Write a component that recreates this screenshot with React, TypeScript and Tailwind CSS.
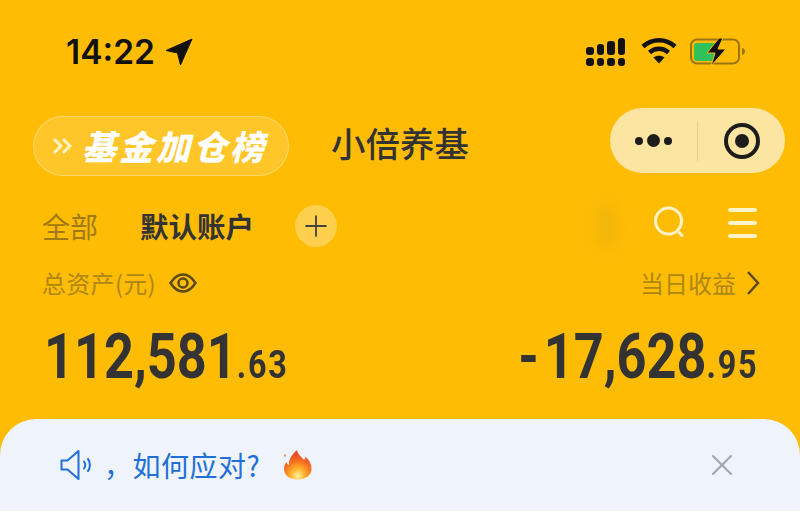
import React from "react";
import { Plus, X } from "lucide-react";

const CJK = "font-['Noto_Sans_CJK_SC',sans-serif]";
const NUM = "font-['Roboto',sans-serif]";

const SignalIcon = () => (
  <svg width="42" height="28" viewBox="0 0 42 28" fill="#111">
    <rect x="0" y="9" width="8" height="8" rx="3" />
    <rect x="11" y="6" width="7" height="11" rx="3" />
    <rect x="21" y="3" width="8" height="14" rx="3" />
    <rect x="32" y="0" width="7" height="17" rx="3" />
    <rect x="0" y="20" width="8" height="8" rx="3" />
    <rect x="11" y="20" width="7" height="8" rx="3" />
    <rect x="21" y="20" width="8" height="8" rx="3" />
    <rect x="32" y="20" width="7" height="8" rx="3" />
  </svg>
);

const WifiIcon = () => (
  <svg className="mb-[3px]" width="36" height="27" viewBox="0 0 36 27" fill="none" stroke="#111" strokeWidth="4.5">
    <path d="M2 9.500C11 1 25 1 34 9.500" />
    <path d="M8.500 15.500C14 10.500 22 10.500 27.500 15.500" />
    <path d="M18 26.500L12.500 20.500C15.500 18 20.500 18 23.500 20.500Z" fill="#111" stroke="none" />
  </svg>
);

const BatteryIcon = () => (
  <svg width="56" height="28" viewBox="0 0 56 28" fill="none">
    <rect x="1" y="1.500" width="48" height="24" rx="6" stroke="#9a7414" strokeWidth="2" />
    <path d="M4 8a3 3 0 0 1 3-3h19v18H7a3 3 0 0 1-3-3Z" fill="#2fc25b" />
    <path d="M52 10c2 .5 3 2 3 3.500s-1 3-3 3.500Z" fill="#9a7414" />
    <path d="M29 0L17 15h8l-4 13 15-17h-8l5-11Z" fill="#111" stroke="#ffbc05" strokeWidth="1" />
  </svg>
);

const FireIcon = () => (
  <svg width="32" height="32" viewBox="0 0 32 32">
    <defs>
      <radialGradient id="flame" cx="50%" cy="88%" r="80%">
        <stop offset="0%" stopColor="#fff3a6" />
        <stop offset="30%" stopColor="#ffb52e" />
        <stop offset="70%" stopColor="#f4661e" />
        <stop offset="100%" stopColor="#e8472a" />
      </radialGradient>
    </defs>
    <path
      d="M15 1c1 5 4 6 7 10 1-1 1.500-2 1.500-3.500 4 4 6 8 6 12 0 7-6 11-13.500 11S2 27 2 20c0-3 1-5 2.500-7 .5 1.500 1 2.500 2.500 3C6.500 10 10 6 15 1Z"
      fill="url(#flame)"
    />
    <path d="M3 5c1 1 1 2 0 3-1-1-1-2 0-3Z" fill="#f4661e" />
  </svg>
);

const App = () => {
  return (
    <div className={`w-[800px] h-[523px] overflow-hidden bg-white flex flex-col ${CJK}`}>
      <div className="h-[511px] bg-[#ffbc05] flex flex-col">
        {/* status bar */}
        <div className="flex items-center justify-between pl-[66px] pr-[54px] pt-[33px] h-[71px]">
          <div className="flex items-center gap-[10px]">
            <span className="font-['Inter',sans-serif] font-semibold text-[33.500px] leading-[38px] text-[#111]">
              14:22
            </span>
            <svg width="28" height="28" viewBox="0 0 28 28" fill="#111">
              <path d="M27 1L1 12.500l11.500 2.500 3 12Z" strokeLinejoin="round" stroke="#111" strokeWidth="1" />
            </svg>
          </div>
          <div className="flex items-center gap-[13px]">
            <SignalIcon />
            <WifiIcon />
            <BatteryIcon />
          </div>
        </div>

        {/* title row */}
        <div className="flex items-start pl-[33px] pr-[15px] pt-[37px] h-[123px]">
          <div className="mt-[8px] w-[256px] h-[60px] rounded-full bg-white/15 border border-white/30 flex items-center pl-[18px] shrink-0">
            <svg width="20" height="18" viewBox="0 0 20 18" fill="none" stroke="#fff3c4" strokeWidth="3">
              <path d="M2 2l7 7-7 7" />
              <path d="M11 2l7 7-7 7" />
            </svg>
            <span className="ml-[10px] text-white italic font-black text-[34px] leading-none tracking-[3px] whitespace-nowrap">
              基金加仓榜
            </span>
          </div>
          <div className="ml-[42px] mt-[12px] text-[34.500px] leading-[44px] font-medium text-[#333]">
            小倍养基
          </div>
          <div className="ml-auto w-[175px] h-[65px] rounded-full bg-[#fbe5a0] flex items-center">
            <div className="w-[87px] flex items-center justify-center gap-[4px]">
              <span className="w-[8px] h-[8px] rounded-full bg-[#1c1c1c]" />
              <span className="w-[13px] h-[13px] rounded-full bg-[#1c1c1c]" />
              <span className="w-[8px] h-[8px] rounded-full bg-[#1c1c1c]" />
            </div>
            <div className="w-px h-[40px] bg-[#e6cf8c]" />
            <div className="flex-1 flex items-center justify-center">
              <div className="w-[36px] h-[36px] rounded-full border-[4px] border-[#1c1c1c] flex items-center justify-center">
                <span className="w-[14px] h-[14px] rounded-full bg-[#1c1c1c]" />
              </div>
            </div>
          </div>
        </div>

        {/* account tabs */}
        <div className="flex items-center pl-[42px] pr-[43px] h-[42px] mt-[11px]">
          <span className="text-[28px] leading-none text-[#a07a10]">全部</span>
          <span className="ml-[42px] text-[28.500px] leading-none font-bold text-[#333]">默认账户</span>
          <div className="ml-[41px] w-[42px] h-[42px] rounded-full bg-[#ffd04d] flex items-center justify-center">
            <Plus size={34} strokeWidth={1.3} color="#444" />
          </div>
          <div className="ml-auto w-[18px] h-[44px] rounded-full bg-[#e0ad12] blur-[7px] opacity-50" />
          <svg className="ml-[38px] mb-[6px]" width="34" height="34" viewBox="0 0 34 34" fill="none" stroke="#fff3c9" strokeWidth="3">
            <circle cx="15.500" cy="15" r="13" />
            <path d="M26 26.500l3 3" strokeLinecap="round" />
          </svg>
          <div className="ml-[41px] mb-[6px] w-[29px] flex flex-col gap-[9px]">
            <span className="h-[4px] rounded-full bg-[#fff3c9]" />
            <span className="h-[4px] rounded-full bg-[#fff3c9]" />
            <span className="h-[4px] rounded-full bg-[#fff3c9]" />
          </div>
        </div>

        {/* totals */}
        <div className="flex items-center justify-between pl-[42px] pr-[40px] mt-[21px] h-[30px]">
          <div className="flex items-center">
            <span className="text-[24px] leading-none tracking-[0.3px] text-[#ae8613] whitespace-nowrap">总资产(元)</span>
            <svg className="ml-[13px]" width="28" height="20" viewBox="0 0 28 20" fill="none" stroke="#5b4a17" strokeWidth="2.500">
              <path d="M1.500 10C6 3 10 1.500 14 1.500S22 3 26.500 10C22 17 18 18.500 14 18.500S6 17 1.500 10Z" />
              <circle cx="14" cy="10" r="4.500" />
            </svg>
          </div>
          <div className="flex items-center">
            <span className="text-[24px] leading-none text-[#ae8613]">当日收益</span>
            <svg className="ml-[10px]" width="14" height="26" viewBox="0 0 14 26" fill="none" stroke="#5b4a17" strokeWidth="2.500">
              <path d="M2 2l10 11L2 24" />
            </svg>
          </div>
        </div>

        <div className={`flex items-end justify-between pl-[44px] pr-[42px] mt-[26px] h-[64px] text-[#333] ${NUM}`}>
          <div className="font-bold leading-none whitespace-nowrap origin-left scale-x-[0.83]">
            <span className="text-[63px]">112,581</span>
            <span className="text-[39px] tracking-[2px]">.63</span>
          </div>
          <div className="font-bold leading-none whitespace-nowrap origin-right scale-x-[0.83]">
            <span className="text-[63px] tracking-[6px]">-</span>
            <span className="text-[63px]">17,628</span>
            <span className="text-[39px] tracking-[2px]">.95</span>
          </div>
        </div>

        {/* notice card */}
        <div className="mt-auto h-[92px] rounded-t-[36px] bg-[#eef3fc] flex items-center pl-[60px] pr-[60px]">
          <svg width="32" height="32" viewBox="0 0 32 32" fill="none" stroke="#1f6fd6" strokeWidth="2" strokeLinejoin="round" strokeLinecap="round">
            <path d="M1.500 11.500v9h6l11 9.500V2l-11 9.500Z" />
            <path d="M24 12.500c1.500 2 1.500 5 0 7" />
            <path d="M28 10c2.500 3 2.500 9 0 12" />
          </svg>
          <span className="ml-[12px] text-[28px] leading-none tracking-[0.5px] text-[#1f6fd6] whitespace-nowrap">，如何应对?</span>
          <span className="ml-[22px]">
            <FireIcon />
          </span>
          <X className="ml-auto" size={36} strokeWidth={1.4} color="#a3a7ad" />
        </div>
      </div>
    </div>
  );
};

export default App;
